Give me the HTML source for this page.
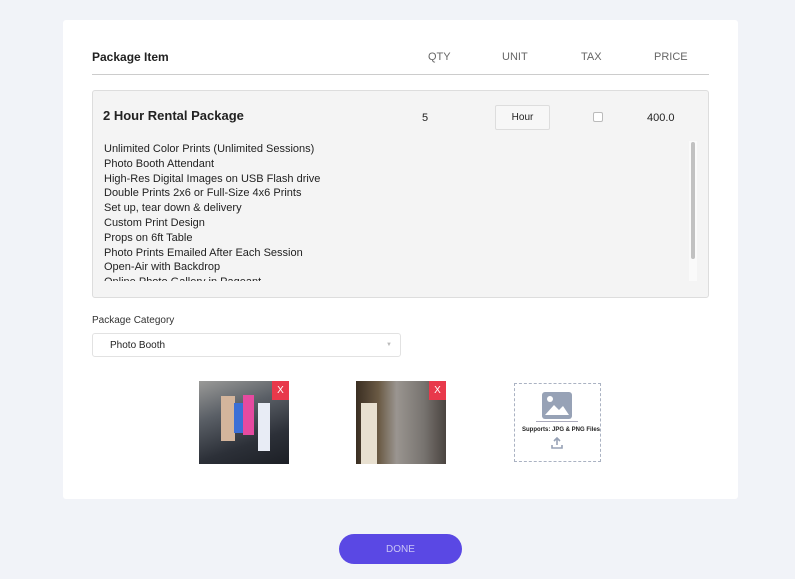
<!DOCTYPE html>
<html><head><meta charset="utf-8"><style>
*{margin:0;padding:0;box-sizing:border-box}
body{width:795px;height:579px;background:#f1f3f8;font-family:"Liberation Sans",sans-serif;position:relative;overflow:hidden;color:#222}
.card{position:absolute;left:63px;top:20px;width:675px;height:479px;background:#fff;border-radius:3px}
.abs{position:absolute}
.h{font-size:11px;color:#666;top:51px}
.pkg{position:absolute;left:92px;top:90px;width:617px;height:208px;background:#f4f4f4;border:1px solid #ddd;border-radius:3px}
.list{position:absolute;left:104px;top:142px;font-size:11px;line-height:14.8px;color:#222;height:139px;overflow:hidden}
.img{position:absolute;top:381px;width:90px;height:83px}
.x{position:absolute;right:0;top:0;width:17px;height:19px;background:#e8394b;color:#fff;font-size:10px;text-align:center;line-height:19px}
</style></head><body>
<div class="card"></div>
<div class="abs" style="left:92px;top:50px;font-size:12px;font-weight:bold;color:#222">Package Item</div>
<div class="abs h" style="left:428px">QTY</div>
<div class="abs h" style="left:502px">UNIT</div>
<div class="abs h" style="left:581px">TAX</div>
<div class="abs h" style="left:654px">PRICE</div>
<div class="abs" style="left:92px;top:74px;width:617px;height:1px;background:#ccc"></div>
<div class="pkg"></div>
<div class="abs" style="left:103px;top:108px;font-size:13px;font-weight:bold">2 Hour Rental Package</div>
<div class="abs" style="left:422px;top:112px;font-size:11px">5</div>
<div class="abs" style="left:495px;top:105px;width:55px;height:25px;background:#f7f7f7;border:1px solid #ddd;border-radius:2px;font-size:10px;text-align:center;line-height:23px">Hour</div>
<div class="abs" style="left:593px;top:112px;width:10px;height:10px;border:1px solid #bbb;border-radius:2px;background:#fff"></div>
<div class="abs" style="left:647px;top:112px;font-size:11px;width:28px;overflow:hidden;white-space:nowrap">400.00</div>
<div class="abs" style="left:689px;top:141px;width:8px;height:140px;background:#fafafa"><div style="margin:1px 2px;width:4px;height:117px;background:#c1c1c1;border-radius:2px"></div></div>
<div class="list">Unlimited Color Prints (Unlimited Sessions)<br>Photo Booth Attendant<br>High-Res Digital Images on USB Flash drive<br>Double Prints 2x6 or Full-Size 4x6 Prints<br>Set up, tear down &amp; delivery<br>Custom Print Design<br>Props on 6ft Table<br>Photo Prints Emailed After Each Session<br>Open-Air with Backdrop<br>Online Photo Gallery in Pageant</div>
<div class="abs" style="left:92px;top:315px;font-size:10px;color:#333">Package Category</div>
<div class="abs" style="left:92px;top:333px;width:309px;height:24px;border:1px solid #e2e2e2;border-radius:3px;background:#fff;font-size:10px;padding-left:17px;line-height:23px">Photo Booth<span style="position:absolute;right:8px;top:0;color:#bbb;font-size:6px">▼</span></div>
<div class="img" style="left:199px;background:linear-gradient(160deg,#9a9a98 0%,#5a5f66 35%,#2c3038 70%,#1c1f25 100%)">
<div style="position:absolute;left:22px;top:15px;width:14px;height:45px;background:#d4b59c"></div>
<div style="position:absolute;left:35px;top:22px;width:10px;height:30px;background:#3c6fd6"></div>
<div style="position:absolute;left:44px;top:14px;width:11px;height:40px;background:#e64aa0"></div>
<div style="position:absolute;left:59px;top:22px;width:12px;height:48px;background:#e8ecf5"></div>
<div class="x">X</div></div>
<div class="img" style="left:356px;background:linear-gradient(90deg,#3a2e22 0%,#6a5a44 25%,#9a9590 45%,#787470 75%,#4a4440 100%)">
<div style="position:absolute;left:5px;top:22px;width:16px;height:61px;background:#e8e0d0"></div>
<div class="x">X</div></div>
<div class="abs" style="left:514px;top:383px;width:87px;height:79px;border:1px dashed #aab2c2"></div>
<svg class="abs" style="left:542px;top:392px" width="30" height="27" viewBox="0 0 30 27"><rect width="30" height="27" rx="3" fill="#97a2b6"/><circle cx="8" cy="7" r="3" fill="#fff"/><path d="M3 23 L12 13 L17 18 L21 14 L27 23Z" fill="#fff"/></svg>
<div class="abs" style="left:536px;top:421px;width:42px;height:1px;background:#aab"></div>
<div class="abs" style="left:522px;top:427px;font-size:6px;font-weight:bold;color:#222">Supports: JPG &amp; PNG Files</div>
<svg class="abs" style="left:551px;top:437px" width="12" height="12" viewBox="0 0 12 12"><path d="M6 1 L6 8 M3 4 L6 1 L9 4 M1 8 L1 11 L11 11 L11 8" stroke="#97a2b6" stroke-width="1.6" fill="none"/></svg>
<div class="abs" style="left:339px;top:534px;width:123px;height:30px;border-radius:15px;background:#5a48e4;color:#c9c4f5;font-size:10px;text-align:center;line-height:32px">DONE</div>
</body></html>
